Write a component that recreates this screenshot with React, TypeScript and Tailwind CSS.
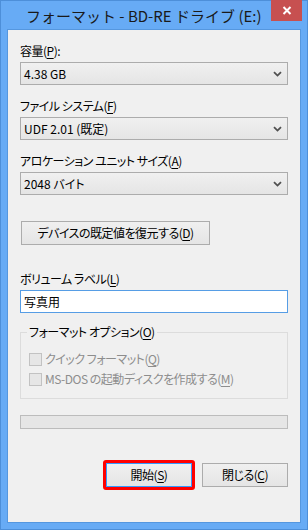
import React from 'react';

const Chevron = () => (
  <svg width="9" height="6" viewBox="0 0 9 6" className="shrink-0">
    <path d="M1 1.2 L4.5 4.6 L8 1.2" fill="none" stroke="#505050" strokeWidth="1.8" />
  </svg>
);

const Combo: React.FC<{ value: string }> = ({ value }) => (
  <div className="mt-[3px] h-[23px] flex items-center justify-between border border-[#acacac] bg-gradient-to-b from-[#f0f0f0] to-[#e5e5e5] pl-[3px] pr-[5px] text-[12px] leading-[16px] tracking-normal">
    <span>{value}</span>
    <Chevron />
  </div>
);

const Mn: React.FC<{ c: string }> = ({ c }) => <span className="underline underline-offset-2">{c}</span>;

const Check: React.FC<{ children: React.ReactNode }> = ({ children }) => (
  <div className="h-[20px] flex items-center gap-[3px] text-[#8d8d8d]">
    <span className="w-[13px] h-[13px] border border-[#c2c2c2] bg-[#e6e6e6] shrink-0" />
    <span>{children}</span>
  </div>
);

const App: React.FC = () => {
  return (
    <div className="w-[308px] h-[530px] bg-[#67abf5] border border-[#4d8fd9] flex flex-col font-['Noto_Sans_CJK_JP',sans-serif] text-[#000] text-[12px] leading-[16px] select-none">
      {/* Title bar */}
      <div className="h-[28px] flex items-start shrink-0">
        <div className="pl-[25px] pt-[5px] text-[15px] leading-[20px] text-[#1a1a1a] flex-1 whitespace-nowrap">
          フォーマット - BD-RE ドライブ (E:)
        </div>
        <div className="-mt-px mr-[5px] w-[31px] h-[21px] bg-[#c75050] flex items-center justify-center">
          <svg width="10" height="9" viewBox="0 0 10 9">
            <path d="M1.5 1 L8.5 8 M8.5 1 L1.5 8" stroke="#fff" strokeWidth="2" />
          </svg>
        </div>
      </div>

      {/* Client */}
      <div className="mx-[6px] mb-[6px] flex-1 border border-[#5597df] bg-[#f0f0f0] px-[12px] flex flex-col [font-feature-settings:'palt'] tracking-[-0.5px]">
        <div className="mt-[13px] h-[16px]">容量(<Mn c="P" />):</div>
        <Combo value="4.38 GB" />

        <div className="mt-[13px] h-[16px]">ファイル システム(<Mn c="F" />)</div>
        <Combo value="UDF 2.01 (既定)" />

        <div className="mt-[13px] h-[16px]">アロケーション ユニット サイズ(<Mn c="A" />)</div>
        <Combo value="2048 バイト" />

        <div className="mt-[26px] ml-px w-[189px] h-[24px] border border-[#acacac] bg-gradient-to-b from-[#f0f0f0] to-[#e5e5e5] flex items-center justify-center">
          デバイスの既定値を復元する(<Mn c="D" />)
        </div>

        <div className="mt-[26px] h-[16px]">ボリューム ラベル(<Mn c="L" />)</div>
        <div className="mt-[3px] h-[23px] border border-[#569de5] bg-white pl-[3px] flex items-center tracking-normal">写真用</div>

        <fieldset className="mt-[11px] border border-[#dcdcdc] px-[8px] pb-[9px]">
          <legend className="px-[2px] -ml-[2px] h-[16px]">フォーマット オプション(<Mn c="O" />)</legend>
          <div className="mt-[9px]">
            <Check>クイック フォーマット(<Mn c="Q" />)</Check>
            <Check>MS-DOS の起動ディスクを作成する(<Mn c="M" />)</Check>
          </div>
        </fieldset>

        <div className="mt-[16px] h-[14px] border border-[#bcbcbc] bg-[#e6e6e6]" />

        <div className="mt-[34px] flex justify-end gap-[10px]">
          <div className="-m-[3px] border-[3px] border-[#ff0000] rounded-[3px]">
            <div className="w-[86px] h-[24px] border border-[#3399ff] bg-gradient-to-b from-[#f0f0f0] to-[#e5e5e5] flex items-center justify-center">
              開始(<Mn c="S" />)
            </div>
          </div>
          <div className="w-[86px] h-[24px] border border-[#acacac] bg-gradient-to-b from-[#f0f0f0] to-[#e5e5e5] flex items-center justify-center">
            閉じる(<Mn c="C" />)
          </div>
        </div>
      </div>
    </div>
  );
};

export default App;
